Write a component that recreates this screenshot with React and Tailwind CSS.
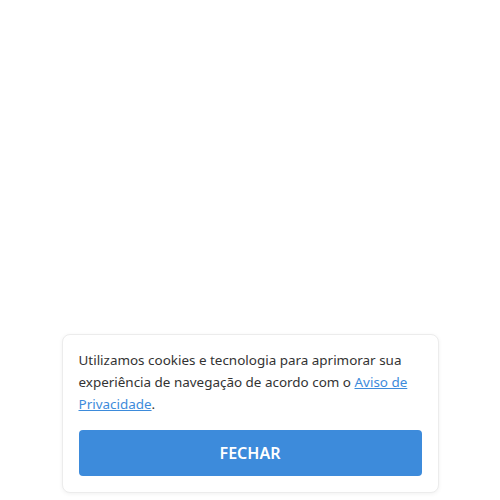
import React from "react";

const App = () => {
    return (
        <div className="h-[500px] w-full bg-white flex flex-col items-center justify-end pb-[7px]" style={{ fontFamily: "'Noto Sans', 'Open Sans', sans-serif" }}>
            {/* Cookie banner */}
            <div className="w-[377px] bg-white border border-[#ececec] rounded-lg shadow-[0_1px_4px_rgba(0,0,0,0.06)] px-4 pt-[14px] pb-4">
                <p className="text-[13.45px] leading-[22px] text-[#333]">
                    Utilizamos cookies e tecnologia para aprimorar sua experiência de navegação de acordo com o{" "}
                    <a href="#" className="text-[#3d8bdb] underline">Aviso de Privacidade</a>.
                </p>
                <button className="mt-[15px] w-full h-[46px] rounded bg-[#3d8bdb] text-white text-[16px] font-semibold">
                    FECHAR
                </button>
            </div>
        </div>
    );
};

export default App;
